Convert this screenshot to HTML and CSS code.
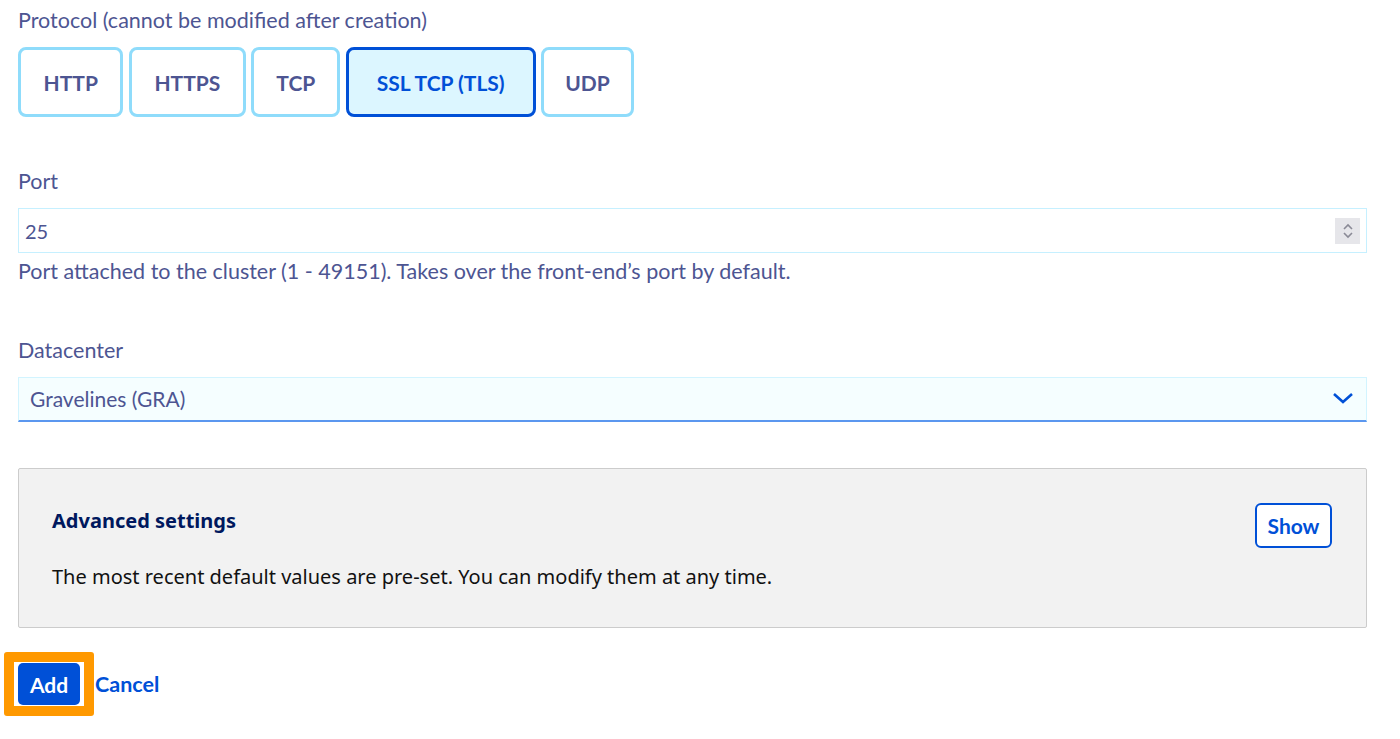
FILE: index.html
```html
<!DOCTYPE html>
<html lang="en">
<head>
<meta charset="utf-8">
<title>Add back-end</title>
<link rel="stylesheet" href="styles.css">
</head>
<body>
<div class="form">
  <div class="label first">Protocol (cannot be modified after creation)</div>
  <div class="tiles">
    <button class="tile">HTTP</button>
    <button class="tile">HTTPS</button>
    <button class="tile">TCP</button>
    <button class="tile selected">SSL TCP (TLS)</button>
    <button class="tile">UDP</button>
  </div>

  <div class="label port-label">Port</div>
  <div class="input">
    <span class="value">25</span>
    <span class="spinner">
      <svg width="12" height="20" viewBox="0 0 12 20"><path d="M2 8 L6 4 L10 8" fill="none" stroke="#8a8a96" stroke-width="1.6"/><path d="M2 12 L6 16 L10 12" fill="none" stroke="#8a8a96" stroke-width="1.6"/></svg>
    </span>
  </div>
  <div class="help">Port attached to the cluster (1 - 49151). Takes over the front-end’s port by default.</div>

  <div class="label dc-label">Datacenter</div>
  <div class="select">
    <span class="value">Gravelines (GRA)</span>
    <svg class="chev" width="22" height="14" viewBox="0 0 22 14"><path d="M2 3 L11 11 L20 3" fill="none" stroke="#0050d7" stroke-width="2.6"/></svg>
  </div>

  <div class="advanced">
    <div class="adv-head">
      <div class="adv-title">Advanced settings</div>
      <button class="show">Show</button>
    </div>
    <div class="adv-desc">The most recent default values are pre-set. You can modify them at any time.</div>
  </div>

  <div class="actions">
    <span class="highlight"><button class="add">Add</button></span>
    <a class="cancel" href="#">Cancel</a>
  </div>
</div>
</body>
</html>
```
FILE: styles.css
```css
html, body {
  margin: 0;
  padding: 0;
  background: #ffffff;
}
body {
  font-family: "Lato", "Noto Sans", sans-serif;
  color: #4d5592;
}
.form {
  padding: 8px 33px 0 18px;
}
.label {
  font-size: 21.5px;
  line-height: 24px;
  color: #4d5592;
}
.tiles {
  display: flex;
  gap: 5.5px;
  margin-top: 15px;
}
.tile {
  height: 70px;
  box-sizing: border-box;
  border: 3px solid #8fdcfb;
  border-radius: 8px;
  background: #ffffff;
  font-family: "Lato", sans-serif;
  font-weight: 700;
  font-size: 21px;
  color: #4d5592;
  padding: 0 22.5px;
}
.tile:nth-child(3) {
  padding: 0 22px;
}
.tile:nth-child(5) {
  padding: 0 21px;
}
.tile.selected {
  border-color: #0050d7;
  background: #dcf6ff;
  color: #0050d7;
  padding: 0 28px;
}
.port-label {
  margin-top: 52px;
}
.input {
  margin-top: 15px;
  height: 45px;
  box-sizing: border-box;
  border: 1px solid #c6f0ff;
  display: flex;
  align-items: center;
  justify-content: space-between;
  padding: 0 6px 0 6px;
  font-size: 20px;
  color: #4d5592;
}
.spinner {
  width: 25px;
  height: 26px;
  background: #e6e6ea;
  display: flex;
  align-items: center;
  justify-content: center;
}
.help {
  margin-top: 6px;
  font-size: 21.5px;
  line-height: 24px;
  color: #4d5592;
}
.dc-label {
  margin-top: 55px;
}
.select {
  margin-top: 15px;
  height: 45px;
  box-sizing: border-box;
  background: #f5feff;
  border: 1px solid #d2f4ff;
  border-bottom: 2px solid #5b97ef;
  display: flex;
  align-items: center;
  justify-content: space-between;
  padding: 0 12px 2px 11px;
  font-size: 21px;
  color: #4d5592;
}
.advanced {
  margin-top: 46px;
  height: 160px;
  box-sizing: border-box;
  background: #f2f2f2;
  border: 1px solid #cccccc;
  border-radius: 2px;
  padding: 34px 34px 0 33px;
}
.adv-head {
  display: flex;
  justify-content: space-between;
  align-items: center;
}
.adv-title {
  font-family: "Noto Sans", sans-serif;
  font-weight: 700;
  font-size: 20px;
  color: #00185e;
  margin-top: -10px;
}
.show {
  width: 77px;
  height: 45px;
  box-sizing: border-box;
  border: 2px solid #0050d7;
  border-radius: 6px;
  background: #ffffff;
  color: #0050d7;
  font-family: "Lato", sans-serif;
  font-weight: 700;
  font-size: 21px;
  padding: 0;
}
.adv-desc {
  font-family: "Noto Sans", sans-serif;
  font-size: 20px;
  color: #111111;
  margin-top: 15px;
}
.actions {
  margin-top: 24px;
  margin-left: -14px;
  display: flex;
  align-items: center;
  gap: 1px;
}
.highlight {
  display: inline-flex;
  border: 10px solid #ff9900;
  border-radius: 3px;
  padding: 1px 4px;
  background: #ffffff;
}
.add {
  width: 62px;
  height: 42px;
  border: none;
  border-radius: 5px;
  background: #0050d7;
  color: #ffffff;
  font-family: "Lato", sans-serif;
  font-weight: 700;
  font-size: 21px;
  padding: 0;
}
.cancel {
  color: #0050d7;
  font-weight: 700;
  font-size: 21.5px;
  text-decoration: none;
}
```
